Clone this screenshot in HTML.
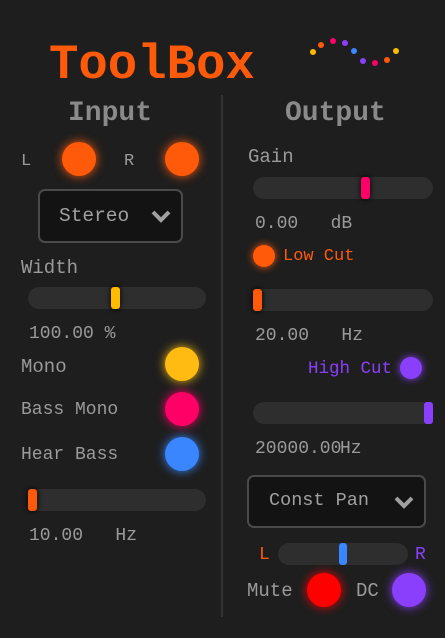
<!DOCTYPE html>
<html><head><style>
body{margin:0;width:445px;height:638px;background:#1e1e1e;position:relative;overflow:hidden;font-family:"Liberation Mono","DejaVu Sans Mono",monospace;color:#9a9a9a}
.a{position:absolute;white-space:pre;line-height:1}
.c{position:absolute;border-radius:50%}
.d{position:absolute;width:6px;height:6px;border-radius:50%}
.s{position:absolute;height:22px;border-radius:11px;background:#2e2e2e}
.t{position:absolute;width:9px;height:22px;border-radius:3px}
.dd{position:absolute;border:2px solid #4a4a4a;border-radius:7px;background:#131313;box-sizing:border-box}
</style></head><body>
<div class="a" style="left:49px;top:41px;font-size:49px;font-weight:bold;color:#ff5a0a">ToolBox</div>
<div class="d" style="left:310px;top:49px;background:#ffbb00"></div>
<div class="d" style="left:318px;top:42px;background:#ff5a0a"></div>
<div class="d" style="left:330px;top:38px;background:#ff0066"></div>
<div class="d" style="left:342px;top:40px;background:#8a3ffc"></div>
<div class="d" style="left:351px;top:48px;background:#3a86ff"></div>
<div class="d" style="left:360px;top:58px;background:#8a3ffc"></div>
<div class="d" style="left:372px;top:60px;background:#ff0066"></div>
<div class="d" style="left:384px;top:57px;background:#ff5a0a"></div>
<div class="d" style="left:393px;top:48px;background:#ffbb00"></div>
<div style="position:absolute;left:221px;top:95px;width:2px;height:522px;background:#333"></div>

<div class="a" style="left:68px;top:100px;font-size:28px;font-weight:bold;color:#8a8a8a">Input</div>
<div class="a" style="left:285px;top:100px;font-size:28px;font-weight:bold;color:#8a8a8a">Output</div>

<div class="a" style="left:21px;top:153px;font-size:17px">L</div>
<div class="c" style="left:62px;top:142px;width:34px;height:34px;background:#ff5a0a;box-shadow:0 0 10px #ff5a0a"></div>
<div class="a" style="left:124px;top:153px;font-size:17px">R</div>
<div class="c" style="left:165px;top:142px;width:34px;height:34px;background:#ff5a0a;box-shadow:0 0 10px #ff5a0a"></div>

<div class="dd" style="left:38px;top:189px;width:145px;height:54px"></div>
<div class="a" style="left:59px;top:207px;font-size:19.5px;color:#a0a0a0">Stereo</div>
<svg style="position:absolute;left:150px;top:208px" width="22" height="16"><path d="M3 4l8 8 8-8" stroke="#a0a0a0" stroke-width="4" fill="none"/></svg>

<div class="a" style="left:21px;top:259px;font-size:19px">Width</div>
<div class="s" style="left:28px;top:287px;width:178px"></div>
<div class="t" style="left:111px;top:287px;background:#ffbb00;box-shadow:0 0 6px #000"></div>
<div class="a" style="left:29px;top:325px;font-size:18px">100.00 %</div>

<div class="a" style="left:21px;top:358px;font-size:19px">Mono</div>
<div class="c" style="left:165px;top:347px;width:34px;height:34px;background:#ffbb11;box-shadow:0 0 10px #ffbb11"></div>
<div class="a" style="left:21px;top:401px;font-size:18px">Bass Mono</div>
<div class="c" style="left:165px;top:392px;width:34px;height:34px;background:#ff0066;box-shadow:0 0 10px #ff0066"></div>
<div class="a" style="left:21px;top:446px;font-size:18px">Hear Bass</div>
<div class="c" style="left:165px;top:437px;width:34px;height:34px;background:#3a86ff;box-shadow:0 0 10px #3a86ff"></div>

<div class="s" style="left:28px;top:489px;width:178px"></div>
<div class="t" style="left:28px;top:489px;background:#ff5a0a;box-shadow:0 0 6px #000"></div>
<div class="a" style="left:29px;top:527px;font-size:18px">10.00   Hz</div>

<div class="a" style="left:248px;top:148px;font-size:19px">Gain</div>
<div class="s" style="left:253px;top:177px;width:180px"></div>
<div class="t" style="left:361px;top:177px;background:#ff0066;box-shadow:0 0 6px #000"></div>
<div class="a" style="left:255px;top:215px;font-size:18px">0.00   dB</div>

<div class="c" style="left:253px;top:245px;width:22px;height:22px;background:#ff5a0a;box-shadow:0 0 8px #ff5a0a"></div>
<div class="a" style="left:283px;top:248px;font-size:17px;color:#ff5a0a">Low Cut</div>
<div class="s" style="left:253px;top:289px;width:180px"></div>
<div class="t" style="left:253px;top:289px;background:#ff5a0a;box-shadow:0 0 6px #000"></div>
<div class="a" style="left:255px;top:327px;font-size:18px">20.00   Hz</div>

<div class="a" style="left:308px;top:361px;font-size:17.5px;color:#8a3ffc">High Cut</div>
<div class="c" style="left:400px;top:357px;width:22px;height:22px;background:#8a3ffc;box-shadow:0 0 8px #8a3ffc"></div>
<div class="s" style="left:253px;top:402px;width:180px"></div>
<div class="t" style="left:424px;top:402px;background:#8a3ffc"></div>
<div class="a" style="left:255px;top:440px;font-size:18px">20000.00</div>
<div class="a" style="left:340px;top:440px;font-size:18px">Hz</div>

<div class="dd" style="left:247px;top:475px;width:179px;height:53px"></div>
<div class="a" style="left:269px;top:492px;font-size:18.5px;color:#a0a0a0">Const Pan</div>
<svg style="position:absolute;left:393px;top:494px" width="22" height="16"><path d="M3 4l8 8 8-8" stroke="#a0a0a0" stroke-width="4" fill="none"/></svg>

<div class="a" style="left:259px;top:546px;font-size:18px;color:#ff5a0a">L</div>
<div class="s" style="left:278px;top:543px;width:130px"></div>
<div class="t" style="left:339px;top:543px;width:8px;background:#3a86ff"></div>
<div class="a" style="left:415px;top:546px;font-size:18px;color:#8a3ffc">R</div>

<div class="a" style="left:247px;top:582px;font-size:19px">Mute</div>
<div class="c" style="left:307px;top:573px;width:34px;height:34px;background:#ff0000;box-shadow:0 0 10px #ff0000"></div>
<div class="a" style="left:356px;top:582px;font-size:19px">DC</div>
<div class="c" style="left:392px;top:573px;width:34px;height:34px;background:#8a3ffc;box-shadow:0 0 10px #8a3ffc"></div>
</body></html>
